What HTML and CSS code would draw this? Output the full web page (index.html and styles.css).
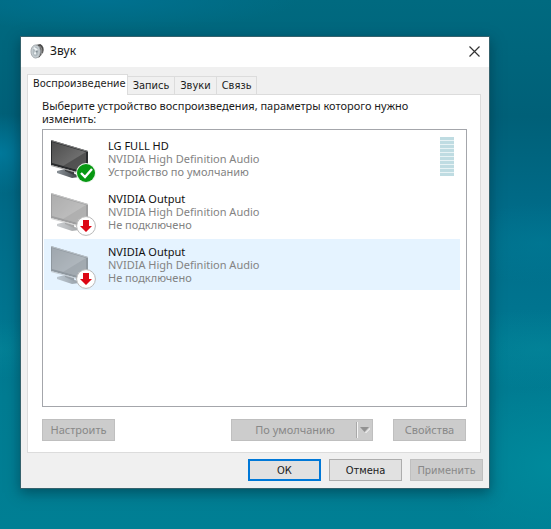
FILE: index.html
```html
<!DOCTYPE html>
<html lang="ru">
<head>
<meta charset="utf-8">
<meta name="viewport" content="width=device-width, initial-scale=1">
<title>Звук</title>
<link rel="stylesheet" href="styles.css">
</head>
<body>
<svg class="defs" aria-hidden="true">
  <defs>
    <linearGradient id="screen" x1="0" y1="0" x2="1" y2="1">
      <stop offset="0" stop-color="#4c4c4c"/><stop offset="1" stop-color="#828282"/>
    </linearGradient>
    <linearGradient id="foot" x1="0" y1="0" x2="1" y2="0">
      <stop offset="0" stop-color="#8b9298"/><stop offset="1" stop-color="#3c4044"/>
    </linearGradient>
    <symbol id="monitor" viewBox="0 0 46 46">
      <path d="M7 34l8-2 12 6 2 2-7 1-15-5z" fill="url(#foot)"/>
      <path d="M15 32l9 3v3l-9-4z" fill="#3b3e40"/>
      <path d="M1 3L38 14v24L1 28z" fill="#292b2d"/>
      <path d="M1 3L38 14v1L1 4z" fill="#858585"/>
      <path d="M2 5l34 10v20L2 26z" fill="url(#screen)"/>
      <path d="M36 15v20l-23-6z" fill="#404040" opacity=".65"/>
      <path d="M1 28l37 10v1L1 29z" fill="#a0a0a0"/>
    </symbol>
    <symbol id="ok-badge" viewBox="0 0 20 20">
      <circle cx="10" cy="10" r="10" fill="#e9f5e9"/>
      <circle cx="10" cy="10" r="9" fill="#079812"/>
      <path d="M5 10l4 4 7-8" fill="none" stroke="#fff" stroke-width="2.4"/>
    </symbol>
    <symbol id="off-badge" viewBox="0 0 20 20">
      <circle cx="10" cy="10" r="9.4" fill="#fff" stroke="#b8b8b8"/>
      <path d="M7 4h6v6h3l-6 6-6-6h3z" fill="#dc0614"/>
    </symbol>
  </defs>
</svg>

<main class="window">
  <header class="titlebar">
    <svg class="app-icon" viewBox="0 0 16 16" aria-hidden="true">
      <path d="M6 1l5-1q5 3 3 9l-4 5-4 1z" fill="#4a4a4a"/>
      <path d="M10 2q4 3 2 10" fill="none" stroke="#a6a6a6"/>
      <ellipse cx="6" cy="8" rx="5" ry="7" fill="#c5cdd1" stroke="#a5acb0"/>
      <ellipse cx="6" cy="8" rx="3" ry="5" fill="#b0babf"/>
      <path d="M4 4l3 2-2 5" fill="none" stroke="#edf2f4" stroke-width="2"/>
      <circle cx="7" cy="8" r="1.2" fill="#848f96"/>
    </svg>
    <h1 class="title">Звук</h1>
    <button class="close" type="button" aria-label="Закрыть">
      <svg viewBox="0 0 11 11"><path d="M.5.5l10 10M10.500.5l-10 10" fill="none" stroke="#333" stroke-width="1.200"/></svg>
    </button>
  </header>

  <div class="content">
    <div class="tabs" role="tablist">
      <button class="tab active" type="button" role="tab" aria-selected="true">Воспроизведение</button>
      <button class="tab" type="button" role="tab">Запись</button>
      <button class="tab" type="button" role="tab">Звуки</button>
      <button class="tab" type="button" role="tab">Связь</button>
    </div>
    <section class="panel" role="tabpanel">
      <p class="hint" id="hint">Выберите устройство воспроизведения, параметры которого нужно изменить:</p>
      <ul class="devices" role="listbox" aria-labelledby="hint">
        <li class="device" role="option">
          <div class="device-icon"><svg class="screen"><use href="#monitor"/></svg><svg class="badge"><use href="#ok-badge"/></svg></div>
          <div class="info"><div class="name">LG FULL HD</div><div>NVIDIA High Definition Audio</div><div>Устройство по умолчанию</div></div>
          <div class="level"></div>
        </li>
        <li class="device off" role="option">
          <div class="device-icon"><svg class="screen"><use href="#monitor"/></svg><svg class="badge"><use href="#off-badge"/></svg></div>
          <div class="info"><div class="name">NVIDIA Output</div><div>NVIDIA High Definition Audio</div><div>Не подключено</div></div>
        </li>
        <li class="device off hover" role="option">
          <div class="device-icon"><svg class="screen"><use href="#monitor"/></svg><svg class="badge"><use href="#off-badge"/></svg></div>
          <div class="info"><div class="name">NVIDIA Output</div><div>NVIDIA High Definition Audio</div><div>Не подключено</div></div>
        </li>
      </ul>
      <div class="actions">
        <button class="btn" type="button" disabled>Настроить</button>
        <button class="btn split" type="button" disabled><span class="split-label">По умолчанию</span><span class="split-arrow"><svg viewBox="0 0 10 6"><path d="M1 6h4l5-5v1L6 6z" fill="#fff"/><path d="M0 0h9L4.500 5z" fill="#929292"/></svg></span></button>
        <button class="btn" type="button" disabled>Свойства</button>
      </div>
    </section>
  </div>

  <footer class="footer">
    <button class="btn default" type="button">ОК</button>
    <button class="btn" type="button">Отмена</button>
    <button class="btn" type="button" disabled>Применить</button>
  </footer>
</main>
</body>
</html>
```
FILE: styles.css
```css
* { box-sizing: border-box; }

body {
  margin: 0;
  min-height: 100vh;
  padding: 36px 61px 40px 20px;
  display: flex;
  font: 11px/13px "Noto Sans", "Open Sans", sans-serif;
  color: #1b1b1b;
  background:
    radial-gradient(ellipse 90px 40px at 98% 46%, #007f9a70, transparent),
    radial-gradient(ellipse 110px 40px at 98% 66%, #058ea070, transparent),
    radial-gradient(ellipse 60px 40px at 0 29%, #00789a, transparent),
    radial-gradient(ellipse 60px 30px at 0 66%, #078a9c70, transparent),
    radial-gradient(ellipse 110px 80px at 100% 88%, #008a9c, transparent),
    radial-gradient(ellipse 200px 30px at 18% 0, #007190, transparent),
    linear-gradient(#006a80, #006078 22%, #006b88 40%, #00748f 58%, #007c92 75%, #007f94);
}

.defs { position: absolute; width: 0; height: 0; }

button { font: inherit; color: inherit; }

.window {
  flex: 1;
  display: flex;
  flex-direction: column;
  min-width: 0;
  background: #f0f0f0;
  border: 1px solid #35626d;
  box-shadow: 0 4px 12px #00283680;
}

.titlebar {
  display: flex;
  align-items: center;
  height: 30px;
  padding: 0 9px 2px;
  background: #fff;
}
.app-icon { width: 15px; height: 15px; }
.title { flex: 1; margin: 0 0 0 5px; font-size: 12px; line-height: 16px; font-weight: 400; }
.close { display: flex; padding: 0; border: 0; background: none; }
.close svg { width: 11px; height: 11px; }

.content { flex: 1; display: flex; flex-direction: column; padding: 7px 8px 0 6px; }

.tabs, .footer { font-family: "DejaVu Sans Condensed", "Noto Sans", sans-serif; }
.tabs { display: flex; align-items: flex-end; height: 20px; }
.tab {
  height: 18px;
  padding: 0 5px;
  border: 1px solid #dcdcdc;
  border-width: 1px 1px 0 0;
  background: #f0f0f0;
  white-space: nowrap;
}
.tab.active {
  height: 21px;
  margin-bottom: -1px;
  padding: 0 1px 3px 5px;
  border-left-width: 1px;
  background: #fff;
  z-index: 1;
}

.panel {
  flex: 1;
  display: flex;
  flex-direction: column;
  padding: 4px 13px 11px 14px;
  border: 1px solid #dcdcdc;
  background: #fff;
}
.hint { margin: 0 0 4px; padding-right: 40px; }

.devices {
  flex: 1;
  display: flex;
  flex-direction: column;
  gap: 2px;
  margin: 0;
  padding: 3px 6px 3px 1px;
  border: 1px solid #a4a6ab;
  list-style: none;
}
.device { display: flex; height: 51px; padding: 4px 6px; color: #838383; }
.device.hover { background: #e5f3ff; }
.device-icon { position: relative; width: 46px; height: 46px; }
.screen { display: block; width: 46px; height: 46px; }
.off .screen { opacity: .45; }
.badge { position: absolute; right: 0; bottom: 0; width: 20px; height: 20px; }
.info { flex: 1; padding: 2px 0 0 12px; }
.name { color: #111; }
.level {
  width: 14px;
  height: 39px;
  background: repeating-linear-gradient(#bfdce2 0 3px, #e8f3f5 3px 4px);
}

.actions { display: flex; justify-content: space-between; padding: 12px 1px 0 0; }
.btn {
  width: 73px;
  height: 22px;
  padding: 0;
  border: 1px solid #adadad;
  background: #e1e1e1;
  white-space: nowrap;
}
.actions .btn { padding-bottom: 1px; }
.btn:disabled { border-color: #bfbfbf; background: #ccc; color: #888; }
.btn.default { border: 2px solid #0078d7; }
.btn.split { display: flex; align-items: center; width: 142px; margin: 0 20px 0 auto; }
.split-label { flex: 1; padding-left: 1px; }
.split-arrow {
  display: flex;
  align-items: center;
  height: 16px;
  padding: 0 2px;
  border-left: 1px solid #f5f5f5;
  box-shadow: -1px 0 #a9a9a9;
}
.split-arrow svg { width: 10px; height: 6px; }

.footer { display: flex; justify-content: flex-end; gap: 8px; padding: 6px 6px 7px; }
```
